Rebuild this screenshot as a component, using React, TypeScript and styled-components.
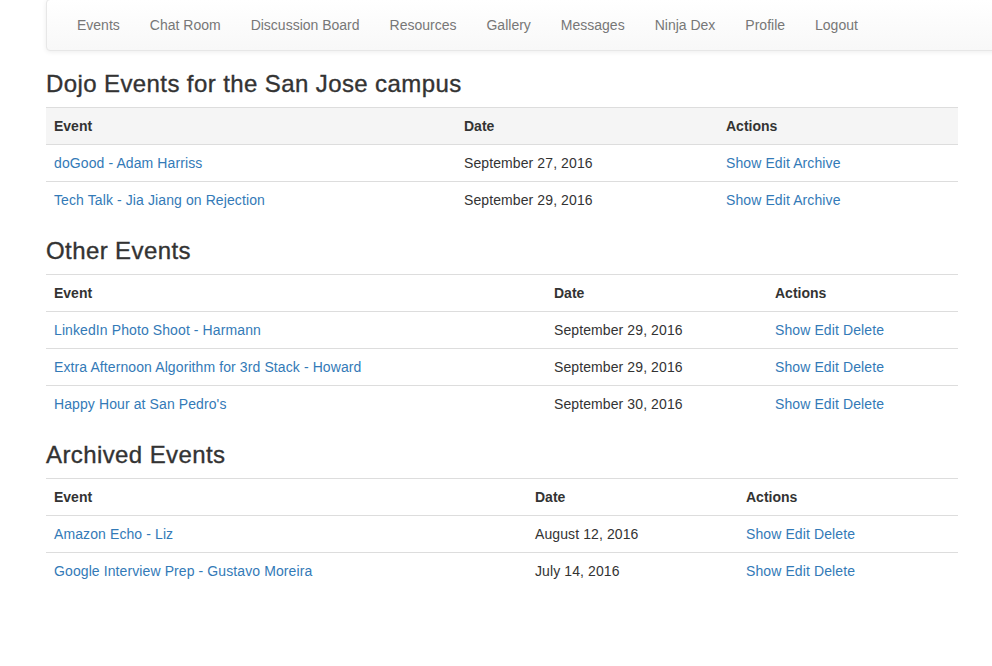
import React, { FC } from 'react'
import styled, { createGlobalStyle } from 'styled-components'

const GlobalStyle = createGlobalStyle`
  html, body {
    margin: 0;
    padding: 0;
    background: #fff;
    overflow-x: hidden;
  }

  body {
    font-family: "Liberation Sans", "Helvetica Neue", Helvetica, Arial, sans-serif;
    font-size: 14px;
    line-height: 1.42857143;
    color: #333;
  }
`

const Page = styled.div`
  width: 100%;
  overflow: hidden;
`

const Navbar = styled.nav`
  display: flex;
  align-items: center;
  min-height: 50px;
  margin: -1px -20px 20px 46px;
  padding: 0 15px;
  border: 1px solid #e7e7e7;
  border-radius: 4px;
  background-color: #f8f8f8;
  background-image: linear-gradient(to bottom, #fff 0, #f8f8f8 100%);
  box-shadow: inset 0 1px 0 rgba(255, 255, 255, 0.15), 0 1px 5px rgba(0, 0, 0, 0.075);
`

const NavList = styled.ul`
  display: flex;
  margin: 0;
  padding: 0;
  list-style: none;
`

const NavLink = styled.a`
  display: block;
  padding: 15px;
  line-height: 20px;
  color: #777;
  text-decoration: none;
  text-shadow: 0 1px 0 rgba(255, 255, 255, 0.25);
`

const Container = styled.main`
  width: 912px;
  margin-left: 46px;
`

const Title = styled.h3`
  margin: 20px 0 10px;
  font-size: 24px;
  font-weight: 500;
  line-height: 26px;
  letter-spacing: 0.4px;
  color: #333;
  -webkit-text-stroke: 0.35px #333;
`

const Table = styled.table`
  width: 100%;
  margin-bottom: 20px;
  border-collapse: collapse;
  border-spacing: 0;
  table-layout: fixed;
`

const Col = styled.col<{ $width: number }>`
  width: ${({ $width }) => $width}px;
`

const HeadCell = styled.th<{ $shaded?: boolean }>`
  padding: 8px;
  line-height: 20px;
  text-align: left;
  font-weight: bold;
  border-top: 1px solid #ddd;
  border-bottom: 1px solid #ddd;
  background: ${({ $shaded }) => ($shaded ? '#f5f5f5' : 'transparent')};
`

const Cell = styled.td`
  padding: 8px;
  line-height: 20px;
  letter-spacing: 0.1px;
  vertical-align: top;
  border-top: 1px solid #ddd;
`

const Link = styled.a`
  color: #337ab7;
  text-decoration: none;
`

interface EventRow {
  name: string
  date: string
}

interface EventTableProps {
  title: string
  columns: [number, number, number]
  shaded?: boolean
  actions: string[]
  events: EventRow[]
}

const EventTable: FC<EventTableProps> = ({ title, columns, shaded, actions, events }) => (
  <section>
    <Title>{title}</Title>
    <Table>
      <colgroup>
        {columns.map((width, i) => (
          <Col key={i} $width={width} />
        ))}
      </colgroup>
      <thead>
        <tr>
          <HeadCell $shaded={shaded}>Event</HeadCell>
          <HeadCell $shaded={shaded}>Date</HeadCell>
          <HeadCell $shaded={shaded}>Actions</HeadCell>
        </tr>
      </thead>
      <tbody>
        {events.map((event) => (
          <tr key={event.name}>
            <Cell>
              <Link href="#">{event.name}</Link>
            </Cell>
            <Cell>{event.date}</Cell>
            <Cell>
              {actions.map((action, i) => (
                <React.Fragment key={action}>
                  {i > 0 && ' '}
                  <Link href="#">{action}</Link>
                </React.Fragment>
              ))}
            </Cell>
          </tr>
        ))}
      </tbody>
    </Table>
  </section>
)

const NAV_ITEMS = [
  'Events',
  'Chat Room',
  'Discussion Board',
  'Resources',
  'Gallery',
  'Messages',
  'Ninja Dex',
  'Profile',
  'Logout',
]

export default function App() {
  return (
    <Page>
      <GlobalStyle />
      <Navbar>
        <NavList>
          {NAV_ITEMS.map((item) => (
            <li key={item}>
              <NavLink href="#">{item}</NavLink>
            </li>
          ))}
        </NavList>
      </Navbar>
      <Container>
        <EventTable
          title="Dojo Events for the San Jose campus"
          columns={[410, 262, 240]}
          shaded
          actions={['Show', 'Edit', 'Archive']}
          events={[
            { name: 'doGood - Adam Harriss', date: 'September 27, 2016' },
            { name: 'Tech Talk - Jia Jiang on Rejection', date: 'September 29, 2016' },
          ]}
        />
        <EventTable
          title="Other Events"
          columns={[500, 221, 191]}
          actions={['Show', 'Edit', 'Delete']}
          events={[
            { name: 'LinkedIn Photo Shoot - Harmann', date: 'September 29, 2016' },
            {
              name: 'Extra Afternoon Algorithm for 3rd Stack - Howard',
              date: 'September 29, 2016',
            },
            { name: "Happy Hour at San Pedro's", date: 'September 30, 2016' },
          ]}
        />
        <EventTable
          title="Archived Events"
          columns={[481, 211, 220]}
          actions={['Show', 'Edit', 'Delete']}
          events={[
            { name: 'Amazon Echo - Liz', date: 'August 12, 2016' },
            { name: 'Google Interview Prep - Gustavo Moreira', date: 'July 14, 2016' },
          ]}
        />
      </Container>
    </Page>
  )
}
